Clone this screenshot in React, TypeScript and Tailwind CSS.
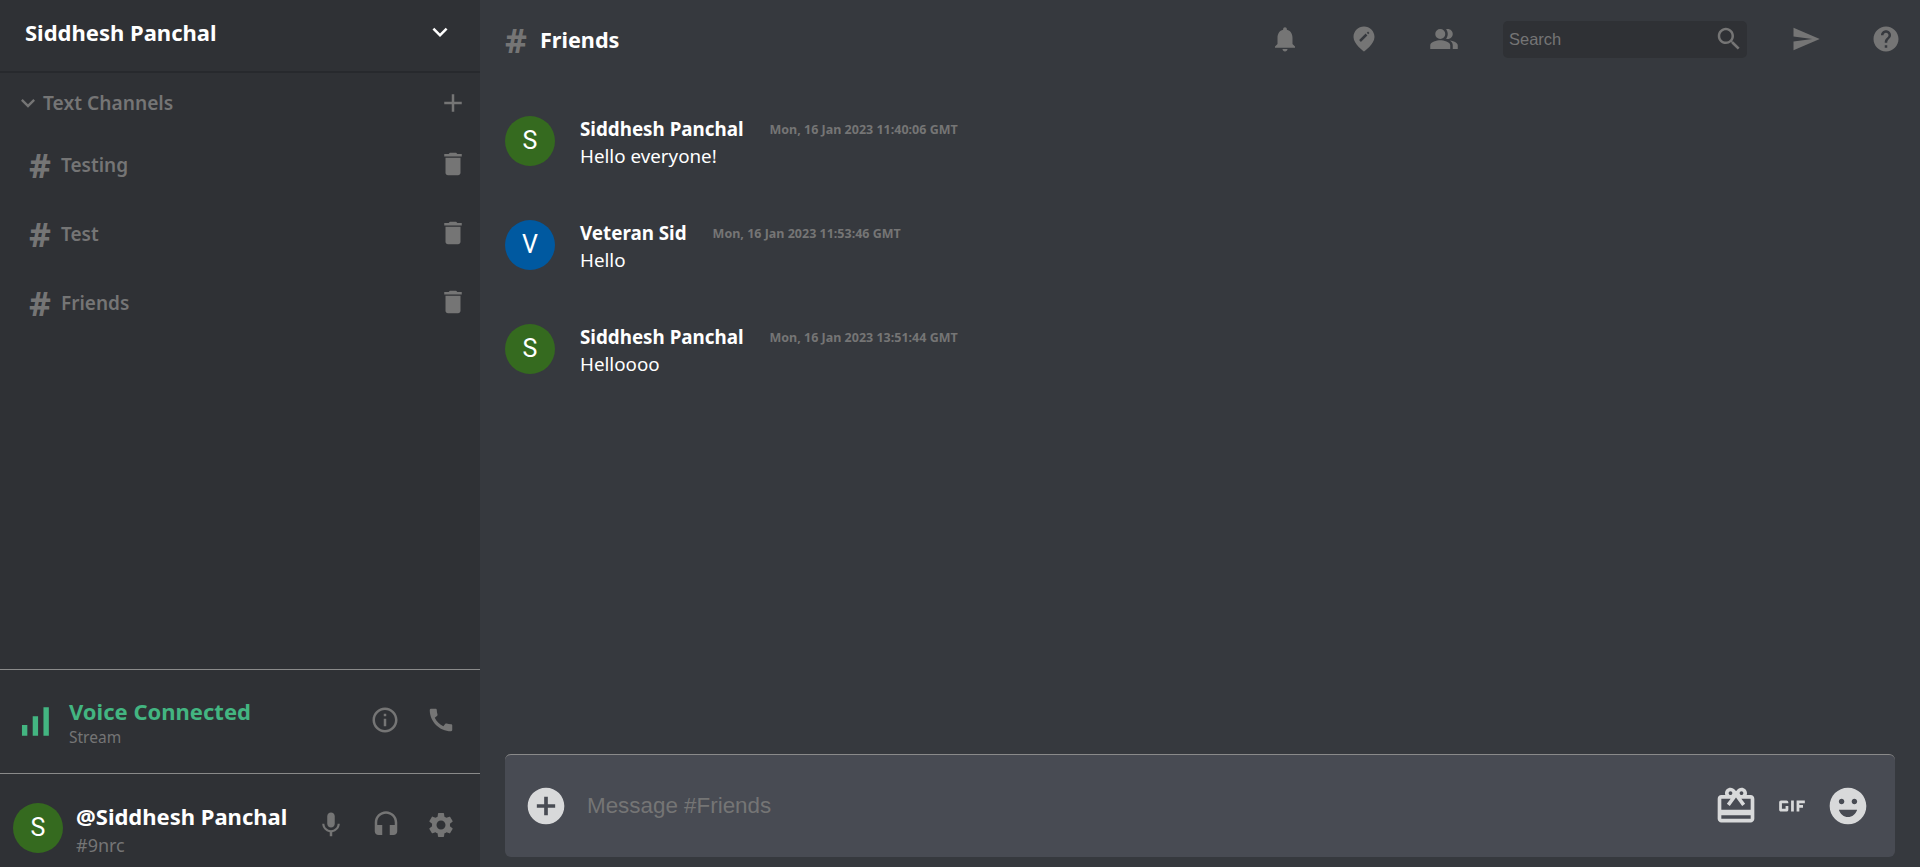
const paths = {
  chevron: "M16.59 8.59 12 13.17 7.41 8.59 6 10l6 6 6-6z",
  plus: "M19 13h-6v6h-2v-6H5v-2h6V5h2v6h6v2z",
  trash: "M6 19c0 1.1.9 2 2 2h8c1.1 0 2-.9 2-2V7H6v12zM19 4h-3.5l-1-1h-5l-1 1H5v2h14V4z",
  signal: "M17 4h3v16h-3zM5 14h3v6H5zm6-5h3v11h-3z",
  info: "M11 7h2v2h-2zm0 4h2v6h-2zm1-9C6.48 2 2 6.48 2 12s4.48 10 10 10 10-4.48 10-10S17.52 2 12 2zm0 18c-4.41 0-8-3.59-8-8s3.59-8 8-8 8 3.59 8 8-3.59 8-8 8z",
  call: "M20.01 15.38c-1.23 0-2.42-.2-3.53-.56-.35-.12-.74-.03-1.01.24l-1.57 1.97c-2.83-1.35-5.48-3.9-6.89-6.83l1.95-1.66c.27-.28.35-.67.24-1.02-.37-1.11-.56-2.3-.56-3.53 0-.54-.45-.99-.99-.99H4.19C3.65 3 3 3.24 3 3.99 3 13.28 10.73 21 20.01 21c.71 0 .99-.63.99-1.18v-3.45c0-.54-.45-.99-.99-.99z",
  mic: "M12 14c1.66 0 2.99-1.34 2.99-3L15 5c0-1.66-1.34-3-3-3S9 3.34 9 5v6c0 1.66 1.34 3 3 3zm5.3-3c0 3-2.54 5.1-5.3 5.1S6.7 14 6.7 11H5c0 3.41 2.72 6.23 6 6.72V21h2v-3.28c3.28-.48 6-3.3 6-6.72h-1.7z",
  headset: "M12 1c-4.97 0-9 4.03-9 9v7c0 1.66 1.34 3 3 3h3v-8H5v-2c0-3.87 3.13-7 7-7s7 3.13 7 7v2h-4v8h3c1.66 0 3-1.34 3-3v-7c0-4.97-4.03-9-9-9z",
  gear: "M19.14 12.94c.04-.3.06-.61.06-.94 0-.32-.02-.64-.07-.94l2.03-1.58c.18-.14.23-.41.12-.61l-1.92-3.32c-.12-.22-.37-.29-.59-.22l-2.39.96c-.5-.38-1.03-.7-1.62-.94l-.36-2.54c-.04-.24-.24-.41-.48-.41h-3.84c-.24 0-.43.17-.47.41l-.36 2.54c-.59.24-1.13.57-1.62.94l-2.39-.96c-.22-.08-.47 0-.59.22L2.74 8.87c-.12.21-.08.47.12.61l2.03 1.58c-.05.3-.09.63-.09.94s.02.64.07.94l-2.03 1.58c-.18.14-.23.41-.12.61l1.92 3.32c.12.22.37.29.59.22l2.39-.96c.5.38 1.03.7 1.62.94l.36 2.54c.05.24.24.41.48.41h3.84c.24 0 .44-.17.47-.41l.36-2.54c.59-.24 1.13-.56 1.62-.94l2.39.96c.22.08.47 0 .59-.22l1.92-3.32c.12-.22.07-.47-.12-.61l-2.01-1.58zM12 15.6c-1.98 0-3.6-1.62-3.6-3.6s1.62-3.6 3.6-3.6 3.6 1.62 3.6 3.6-1.62 3.6-3.6 3.6z",
  bell: "M12 22c1.1 0 2-.9 2-2h-4c0 1.1.89 2 2 2zm6-6v-5c0-3.07-1.64-5.64-4.5-6.32V4c0-.83-.67-1.5-1.5-1.5s-1.5.67-1.5 1.5v.68C7.63 5.36 6 7.92 6 11v5l-2 2v1h16v-1l-2-2z",
  people: "M16.67 13.13C18.04 14.06 19 15.32 19 17v3h4v-3c0-2.18-3.57-3.47-6.33-3.87zM9 12a4 4 0 1 0 0-8 4 4 0 0 0 0 8zM15 12c2.21 0 4-1.79 4-4s-1.79-4-4-4c-.47 0-.91.1-1.33.24C14.5 5.27 15 6.58 15 8s-.5 2.73-1.33 3.76c.42.14.86.24 1.33.24zM9 13c-2.67 0-8 1.34-8 4v3h16v-3c0-2.66-5.33-4-8-4z",
  search: "M15.5 14h-.79l-.28-.27C15.41 12.59 16 11.11 16 9.5 16 5.91 13.09 3 9.5 3S3 5.91 3 9.5 5.91 16 9.5 16c1.61 0 3.09-.59 4.23-1.57l.27.28v.79l5 4.99L20.49 19l-4.99-5zm-6 0C7.01 14 5 11.99 5 9.5S7.01 5 9.5 5 14 7.01 14 9.5 11.99 14 9.5 14z",
  send: "M2.01 21 23 12 2.01 3 2 10l15 2-15 2z",
  help: "M12 2C6.48 2 2 6.48 2 12s4.48 10 10 10 10-4.48 10-10S17.52 2 12 2zm1 17h-2v-2h2v2zm2.07-7.75-.9.92C13.45 12.9 13 13.5 13 15h-2v-.5c0-1.1.45-2.1 1.17-2.83l1.24-1.26c.37-.36.59-.86.59-1.41 0-1.1-.9-2-2-2s-2 .9-2 2H8c0-2.21 1.79-4 4-4s4 1.79 4 4c0 .88-.36 1.68-.93 2.25z",
  addCircle: "M12 2C6.48 2 2 6.48 2 12s4.48 10 10 10 10-4.48 10-10S17.52 2 12 2zm5 11h-4v4h-2v-4H7v-2h4V7h2v4h4v2z",
  gift: "M20 6h-2.18c.11-.31.18-.65.18-1 0-1.66-1.34-3-3-3-1.05 0-1.96.54-2.5 1.35l-.5.67-.5-.68C10.96 2.54 10.05 2 9 2 7.34 2 6 3.34 6 5c0 .35.07.69.18 1H4c-1.11 0-1.99.89-1.99 2L2 19c0 1.11.89 2 2 2h16c1.11 0 2-.89 2-2V8c0-1.11-.89-2-2-2zm-5-2c.55 0 1 .45 1 1s-.45 1-1 1-1-.45-1-1 .45-1 1-1zM9 4c.55 0 1 .45 1 1s-.45 1-1 1-1-.45-1-1 .45-1 1-1zm11 15H4v-2h16v2zm0-5H4V8h5.08L7 10.83 8.62 12 11 8.76l1-1.36 1 1.36L15.38 12 17 10.83 14.92 8H20v6z",
  gif: "M11.5 9H13v6h-1.5zM9 9H6c-.6 0-1 .5-1 1v4c0 .5.4 1 1 1h3c.6 0 1-.5 1-1v-2H8.5v1.5h-2v-3H10V10c0-.5-.4-1-1-1zm10 1.5V9h-4.5v6H16v-2h2v-1.5h-2v-1z",
  emoji: "M11.99 2C6.47 2 2 6.48 2 12s4.47 10 9.99 10C17.52 22 22 17.52 22 12S17.52 2 11.99 2zM8.5 8c.83 0 1.5.67 1.5 1.5S9.33 11 8.5 11 7 10.33 7 9.5 7.67 8 8.5 8zM12 18c-2.28 0-4.22-1.66-5-4h10c-.78 2.34-2.72 4-5 4zm3.5-7c-.83 0-1.5-.67-1.5-1.5S14.67 8 15.5 8s1.5.67 1.5 1.5-.67 1.5-1.5 1.5z",
};

function Icon({ d, className }: { d: string; className: string }) {
  return (
    <svg viewBox="0 0 24 24" fill="currentColor" className={className}>
      <path d={d} />
    </svg>
  );
}

function PinIcon({ className }: { className: string }) {
  return (
    <svg viewBox="0 0 24 24" className={className}>
      <path fill="currentColor" d="M12 2c-4.6 0-8.4 3.7-8.4 8.4C3.6 16 12 22 12 22s8.4-6 8.4-11.6C20.4 5.7 16.6 2 12 2z" />
      <path stroke="#36393e" strokeWidth="2" d="M8.8 13.6 14 8.4" />
      <path stroke="#36393e" strokeWidth="1.6" d="M14.8 7.6l1-1" />
    </svg>
  );
}

function Hash() {
  return <span className="text-[34px] leading-none font-bold text-[#757575]">#</span>;
}

function Avatar({ letter, color }: { letter: string; color: string }) {
  return (
    <div
      className={`w-[50px] h-[50px] shrink-0 rounded-full flex items-center justify-center text-white text-[25px] font-['Roboto',sans-serif] ${color}`}
    >
      {letter}
    </div>
  );
}

const channels = ["Testing", "Test", "Friends"];

const messages = [
  { name: "Siddhesh Panchal", time: "Mon, 16 Jan 2023 11:40:06 GMT", text: "Hello everyone!", letter: "S", color: "bg-[#356a1f]" },
  { name: "Veteran Sid", time: "Mon, 16 Jan 2023 11:53:46 GMT", text: "Hello", letter: "V", color: "bg-[#0059a0]" },
  { name: "Siddhesh Panchal", time: "Mon, 16 Jan 2023 13:51:44 GMT", text: "Helloooo", letter: "S", color: "bg-[#356a1f]" },
];

export default function App() {
  return (
    <div className="flex h-screen overflow-hidden bg-[#36393e] font-['Noto_Sans',sans-serif]">
      {/* Sidebar */}
      <aside className="w-[480px] shrink-0 flex flex-col bg-[#2f3135]">
        <div className="h-[73px] shrink-0 flex items-start justify-between px-[25px] pt-[15px] border-b-2 border-[#27292d]">
          <h1 className="text-[22px] leading-[34px] font-bold text-white">Siddhesh Panchal</h1>
          <Icon d={paths.chevron} className="w-[30px] h-[30px] text-white mt-[2px]" />
        </div>

        <div className="flex-1">
          <div className="flex items-center justify-between pl-[14px] pr-[12px] pt-[15px]">
            <div className="flex items-center gap-[1px]">
              <Icon d={paths.chevron} className="w-[28px] h-[28px] text-[#757575]" />
              <span className="text-[19.2px] leading-[30px] font-semibold text-[#757575]">Text Channels</span>
            </div>
            <Icon d={paths.plus} className="w-[30px] h-[30px] text-[#757575]" />
          </div>

          <div className="mt-[13px] flex flex-col">
            {channels.map((c) => (
              <div key={c} className="h-[69px] flex items-center justify-between pl-[29px] pr-[12px]">
                <div className="flex items-center">
                  <span className="w-[32px] shrink-0"><Hash /></span>
                  <span className="text-[19px] font-semibold text-[#757575]">{c}</span>
                </div>
                <Icon d={paths.trash} className="w-[30px] h-[30px] -mt-[3px] text-[#757575]" />
              </div>
            ))}
          </div>
        </div>

        <div className="h-[104px] shrink-0 flex items-center justify-between border-t border-[#8a8a8a] pl-[13px] pr-[24px]">
          <div className="flex items-center gap-[13px]">
            <Icon d={paths.signal} className="w-[43px] h-[43px] text-[#43b581]" />
            <div className="flex flex-col mt-[2px]">
              <span className="text-[22px] leading-[30px] font-bold text-[#43b581]">Voice Connected</span>
              <span className="text-[15.5px] leading-[23px] text-[#757575]">Stream</span>
            </div>
          </div>
          <div className="flex items-center gap-[26px] mb-[4px]">
            <Icon d={paths.info} className="w-[30px] h-[30px] text-[#757575]" />
            <Icon d={paths.call} className="w-[30px] h-[30px] text-[#757575]" />
          </div>
        </div>

        <div className="h-[94px] shrink-0 flex items-start justify-between border-t border-[#8a8a8a] pl-[13px] pr-[24px] pt-[29px]">
          <div className="flex items-start gap-[13px]">
            <Avatar letter="S" color="bg-[#356a1f]" />
            <div className="flex flex-col -mt-[2px]">
              <span className="text-[22px] leading-[30px] font-bold text-white">@Siddhesh Panchal</span>
              <span className="text-[18px] leading-[28px] text-[#757575]">#9nrc</span>
            </div>
          </div>
          <div className="flex items-center gap-[25px] mt-[7px]">
            <Icon d={paths.mic} className="w-[30px] h-[30px] text-[#757575]" />
            <Icon d={paths.headset} className="w-[30px] h-[30px] text-[#757575]" />
            <Icon d={paths.gear} className="w-[30px] h-[30px] text-[#757575]" />
          </div>
        </div>
      </aside>

      {/* Main */}
      <main className="flex-1 flex flex-col min-w-0">
        <header className="h-[78px] shrink-0 flex items-center justify-between pl-[25px] pr-[19px]">
          <div className="flex items-center mt-[3px]">
            <span className="w-[35px] shrink-0"><Hash /></span>
            <span className="text-[21.6px] font-bold text-white">Friends</span>
          </div>
          <div className="flex items-center">
            <Icon d={paths.bell} className="w-[30px] h-[30px] text-[#757575]" />
            <PinIcon className="w-[30px] h-[30px] ml-[49px] text-[#757575]" />
            <Icon d={paths.people} className="w-[30px] h-[30px] ml-[50px] text-[#757575]" />
            <div className="w-[244px] h-[37px] ml-[44px] flex items-center justify-between bg-[#2f3135] rounded-[5px] pl-[6px] pr-[3px]">
              <input
                placeholder="Search"
                className="w-[150px] bg-transparent outline-none text-[16.5px] font-['Liberation_Sans',sans-serif] placeholder:text-[#757575]"
              />
              <Icon d={paths.search} className="w-[30px] h-[30px] text-[#757575]" />
            </div>
            <Icon d={paths.send} className="w-[30px] h-[30px] ml-[44px] text-[#757575]" />
            <Icon d={paths.help} className="w-[30px] h-[30px] ml-[50px] text-[#757575]" />
          </div>
        </header>

        <div className="flex-1 flex flex-col gap-[50px] pl-[25px] pt-[38px]">
          {messages.map((m, i) => (
            <div key={i} className="flex items-start gap-[25px]">
              <Avatar letter={m.letter} color={m.color} />
              <div className="flex flex-col">
                <div className="flex items-center gap-[26px]">
                  <span className="text-[18.8px] leading-[26px] font-bold text-white">{m.name}</span>
                  <span className="text-[12.5px] mt-[2px] font-bold text-[#757575]">{m.time}</span>
                </div>
                <span className="text-[18.8px] leading-[28px] text-white">{m.text}</span>
              </div>
            </div>
          ))}
        </div>

        <div className="h-[103px] shrink-0 mx-[25px] mb-[10px] flex items-center justify-between bg-[#484b53] border-t border-[#8a8a8a] rounded-[6px] pl-[19px] pr-[25px]">
          <div className="flex items-center flex-1">
            <Icon d={paths.addCircle} className="w-[44px] h-[44px] text-[#d8d9da]" />
            <input
              placeholder="Message #Friends"
              className="ml-[19px] flex-1 bg-transparent outline-none text-[22.4px] font-['Liberation_Sans',sans-serif] text-white placeholder:text-[#757575]"
            />
          </div>
          <div className="flex items-center gap-[12px]">
            <Icon d={paths.gift} className="w-[44px] h-[44px] text-[#d8d9da]" />
            <Icon d={paths.gif} className="w-[44px] h-[44px] text-[#d8d9da]" />
            <Icon d={paths.emoji} className="w-[44px] h-[44px] text-[#d8d9da]" />
          </div>
        </div>
      </main>
    </div>
  );
}
